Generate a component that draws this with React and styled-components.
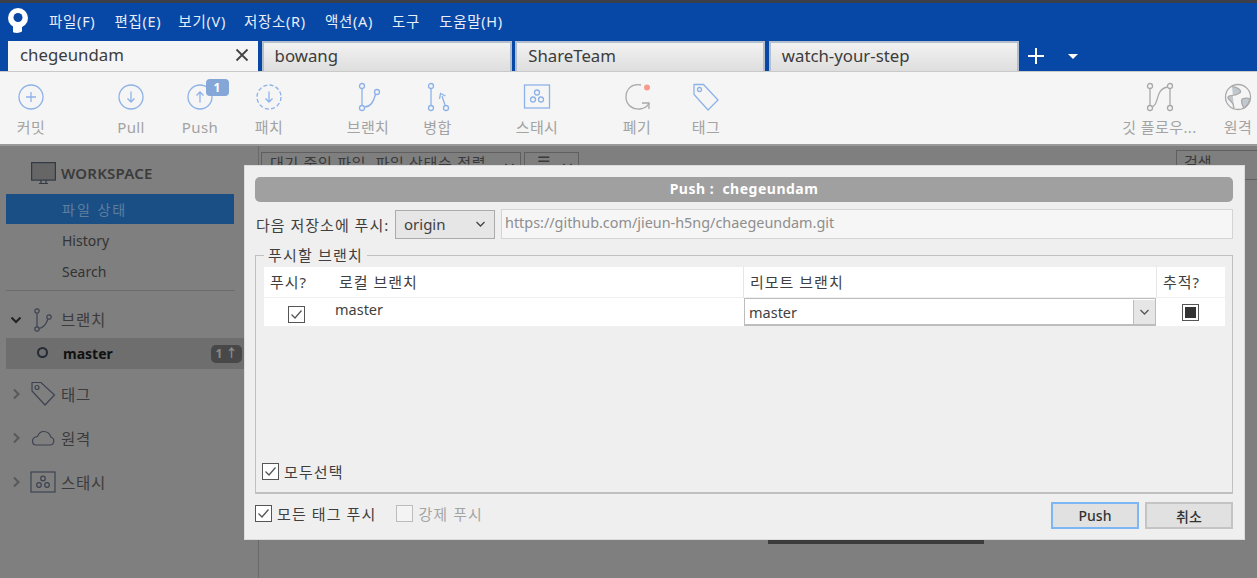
import React from "react";
import styled, { createGlobalStyle } from "styled-components";

const SANS = `"Noto Sans", "Noto Sans CJK KR", sans-serif`;

const GlobalStyle = createGlobalStyle`
  html, body { margin: 0; padding: 0; background: #7f7f7f; }
  * { box-sizing: border-box; }
  body { font-family: ${SANS}; }
`;

const Page = styled.div`
  position: relative;
  width: 1257px;
  height: 578px;
  overflow: hidden;
  display: flex;
  flex-direction: column;
`;

const Header = styled.header`
  height: 71px;
  flex: none;
  background: #0747a6;
  border-top: 3px solid #3a3f4a;
  display: flex;
  flex-direction: column;
`;

const MenuBar = styled.nav`
  height: 38px;
  flex: none;
  display: flex;
  align-items: center;
  padding-left: 8px;
`;

const Logo = styled.svg`
  width: 20px;
  height: 26px;
  margin-right: 21px;
  margin-top: -3px;
`;

const MenuItem = styled.span`
  color: #e8eef8;
  font-size: 14.5px;
  letter-spacing: 0.7px;
  margin-right: ${(p) => p.$gap}px;
  line-height: 18px;
  margin-top: -2px;
`;

const TabBar = styled.div`
  height: 30px;
  flex: none;
  display: flex;
  align-items: flex-end;
  padding-left: 8px;
  gap: 3.6px;
`;

const Tab = styled.div`
  width: 250px;
  height: 30px;
  display: flex;
  align-items: center;
  justify-content: space-between;
  padding: 0 ${(p) => (p.$active ? "8px" : "7px")} 3px ${(p) => (p.$active ? "12px" : "11px")};
  font-size: 16.8px;
  color: #3c3c3c;
  background: ${(p) => (p.$active ? "#f5f5f5" : "linear-gradient(#f2f2f2, #dedede)")};
  border: ${(p) => (p.$active ? "none" : "2px solid #b4bfcd")};
  border-bottom: none;
`;

const AddTab = styled.svg`
  width: 18px;
  height: 18px;
  margin-left: 5px;
  align-self: center;
`;

const TabMenu = styled.span`
  width: 0;
  height: 0;
  margin-left: 19px;
  align-self: center;
  border-left: 5px solid transparent;
  border-right: 5px solid transparent;
  border-top: 5px solid #fff;
`;

const Toolbar = styled.div`
  height: 75px;
  flex: none;
  background: #f5f5f5;
  border-top: 1px solid #c9c9c9;
  border-bottom: 2px solid #9a9a9a;
  display: flex;
  overflow: hidden;
`;

const ToolItem = styled.div`
  width: ${(p) => p.$w || 69}px;
  flex: none;
  margin-left: ${(p) => p.$ml || 0}px;
  margin-right: ${(p) => p.$mr || 0}px;
  display: flex;
  flex-direction: column;
  align-items: center;
  position: relative;
  padding-top: 9px;
`;

const ToolIcon = styled.svg`
  width: 32px;
  height: 32px;
  fill: none;
  stroke: ${(p) => p.$stroke || "#8db2e8"};
  stroke-width: 1.3;
`;

const ToolLabel = styled.span`
  margin-top: 4px;
  font-size: 15px;
  letter-spacing: 0.4px;
  line-height: 20px;
  color: #a3a3a3;
  white-space: nowrap;
`;

const CountBadge = styled.span`
  position: absolute;
  top: 7px;
  left: 40px;
  width: 23px;
  height: 17px;
  background: #84a7d8;
  border-radius: 4px;
  color: #fff;
  font-size: 12px;
  font-weight: 700;
  text-align: center;
  line-height: 17px;
`;

const Spacer = styled.div`
  flex: 1;
`;

const Body = styled.div`
  flex: 1;
  display: flex;
  background: #7f7f7f;
  min-height: 0;
`;

const Sidebar = styled.aside`
  width: 259px;
  flex: none;
  border-right: 1px solid #6a6a6a;
  padding-top: 11px;
`;

const WorkspaceHead = styled.div`
  height: 37px;
  display: flex;
  align-items: center;
  padding: 0 0 5px 31px;
  gap: 5px;
  font-size: 15px;
  font-weight: 600;
  letter-spacing: 0.2px;
  color: #3b3b3b;
`;

const NavRow = styled.div`
  height: ${(p) => p.$h}px;
  margin: 0 ${(p) => (p.$active ? 24 : 0)}px 0 6px;
  padding-left: 56px;
  display: flex;
  align-items: center;
  font-size: 14px;
  letter-spacing: ${(p) => (p.$active ? "2px" : "0")};
  color: ${(p) => (p.$active ? "#5d7e9f" : "#333")};
  background: ${(p) => (p.$active ? "#1a4f85" : "transparent")};
`;

const SideDivider = styled.div`
  height: 1px;
  margin: 4px 23px 0 6px;
  background: #6c6c6c;
`;

const TreeHead = styled.div`
  height: ${(p) => p.$h}px;
  padding-top: ${(p) => p.$pt || 0}px;
  display: flex;
  align-items: center;
  font-size: 15.5px;
  letter-spacing: 0.7px;
  color: #3b3b3b;
`;

const TreeList = styled.div`
  margin-top: 3px;
`;

const TreeCaret = styled.svg`
  width: 12px;
  height: 12px;
  margin-left: 10px;
  flex: none;
  fill: none;
  stroke: ${(p) => (p.$open ? "#222" : "#595959")};
  stroke-width: 2;
`;

const TreeIcon = styled.svg`
  width: 26px;
  height: 26px;
  margin: 0 5px 0 8px;
  flex: none;
  fill: none;
  stroke: #3c4350;
  stroke-width: 1.2;
`;

const BranchRow = styled.div`
  height: 31px;
  margin-left: 6px;
  display: flex;
  align-items: center;
  background: #6e6e6e;
  font-size: 14px;
  font-weight: 700;
  color: #111;
  padding-left: 31px;
`;

const BranchDot = styled.span`
  width: 11px;
  height: 11px;
  border: 2.5px solid #232a35;
  border-radius: 50%;
  margin-right: 15px;
  margin-top: -2px;
`;

const BranchBadge = styled.span`
  margin-left: auto;
  margin-right: 16px;
  width: 31px;
  height: 18px;
  border-radius: 5px;
  background: #484848;
  color: #8b8b8b;
  font-size: 12px;
  font-weight: 700;
  text-align: center;
  line-height: 18px;
`;

const Main = styled.main`
  flex: 1;
  position: relative;
  display: flex;
  align-items: flex-start;
  padding: 6px 0 0 2px;
  font-size: 15px;
  color: #3a3a3a;
`;

const FilterCombo = styled.div`
  width: 260px;
  height: 24px;
  border: 1px solid #5f5f5f;
  padding-left: 8px;
  white-space: nowrap;
  overflow: hidden;
  letter-spacing: 0.7px;
  line-height: 20px;
  display: flex;
  justify-content: space-between;
  padding-right: 5px;
`;

const ComboChevron = styled.svg`
  width: 11px;
  height: 7px;
  margin-top: 10px;
  flex: none;
  fill: none;
  stroke: #3a3a3a;
  stroke-width: 1.4;
`;

const ViewCombo = styled.div`
  width: 55px;
  height: 24px;
  margin-left: 3px;
  border: 1px solid #5f5f5f;
  padding: 0 5px 0 12px;
  line-height: 16px;
  display: flex;
  justify-content: space-between;
`;

const SearchBox = styled.div`
  width: 81px;
  height: 30px;
  margin: -2px 0 0 auto;
  border: 1px solid #5f5f5f;
  border-right: none;
  padding-left: 7px;
  line-height: 22px;
`;

const UnderBar = styled.div`
  position: absolute;
  left: 509px;
  top: 394px;
  width: 216px;
  height: 4px;
  background: #3c3c3c;
`;

const Dialog = styled.section`
  position: absolute;
  left: 244px;
  top: 165px;
  width: 1001px;
  height: 375px;
  background: #efefef;
  border: 1px solid #dcdcdc;
  padding: 11px 11px 0 10px;
  display: flex;
  flex-direction: column;
  font-size: 14.5px;
  color: #3f3f3f;
`;

const TitleBar = styled.div`
  height: 25px;
  flex: none;
  border-radius: 5px;
  background: #a0a0a0;
  color: #fff;
  font-size: 14px;
  letter-spacing: 0.5px;
  font-weight: 700;
  text-align: center;
  line-height: 24px;
  white-space: pre;
`;

const RepoRow = styled.div`
  display: flex;
  align-items: center;
  margin-top: 7px;
  height: 30px;
  flex: none;
`;

const RepoLabel = styled.span`
  width: 140px;
  padding-left: 1px;
  font-size: 15px;
  letter-spacing: 1px;
  white-space: nowrap;
`;

const RepoSelect = styled.div`
  width: 100px;
  height: 29px;
  background: #e6e6e6;
  border: 1px solid #ababab;
  display: flex;
  align-items: center;
  justify-content: space-between;
  padding: 0 8px;
  font-size: 15px;
`;

const RepoUrl = styled.div`
  flex: 1;
  height: 30px;
  margin-left: 6px;
  background: #f6f6f6;
  border: 1px solid #d4d4d4;
  padding-left: 3px;
  font-size: 14.4px;
  color: #8e8e8e;
  line-height: 25px;
`;

const Group = styled.div`
  position: relative;
  height: 239px;
  margin-top: 16px;
  flex: none;
  border: 1px solid #c0c0c0;
  border-bottom-width: 2px;
  padding: 11px 7px 0 8px;
  display: flex;
  flex-direction: column;
`;

const GroupLegend = styled.span`
  position: absolute;
  left: 8px;
  top: -10px;
  padding: 0 4px;
  background: #efefef;
  font-size: 15px;
  letter-spacing: 1.2px;
  line-height: 18px;
`;

const Table = styled.div`
  display: grid;
  grid-template-columns: 479px 413px 69px;
  grid-template-rows: 31px 28px;
  background: #fff;
  flex: none;
`;

const HeadCell = styled.div`
  display: flex;
  align-items: center;
  padding: 0 0 2px ${(p) => p.$pl || 6}px;
  border-left: ${(p) => (p.$line ? "1px solid #e6e6e6" : "none")};
  border-bottom: 1px solid #f0f0f0;
  font-size: 15px;
  letter-spacing: 1px;
`;

const HeadLabel = styled.span`
  width: ${(p) => p.$w}px;
  flex: none;
`;

const BodyCell = styled.div`
  display: flex;
  align-items: center;
  justify-content: ${(p) => (p.$center ? "center" : "flex-start")};
  padding-left: ${(p) => p.$pl || 0}px;
`;

const PushCheck = styled.span`
  display: inline-flex;
  margin: 4px 0 0 24px;
`;

const MasterName = styled.span`
  margin-left: 30px;
  margin-top: -7px;
`;

const BranchCombo = styled.div`
  width: 100%;
  height: 28px;
  display: flex;
  align-items: center;
  border: 1px solid #bdbdbd;
  border-width: 1px 1px 2px 1px;
  padding: 1px 0 0 4px;
`;

const ComboArrow = styled.span`
  margin-left: auto;
  width: 22px;
  height: 100%;
  background: #e6e6e6;
  border-left: 1px solid #bdbdbd;
  display: flex;
  align-items: center;
  justify-content: center;
`;

const CheckBox = styled.span`
  width: 17px;
  height: 17px;
  flex: none;
  background: ${(p) => (p.$disabled ? "#f4f4f4" : "#fff")};
  border: ${(p) => (p.$disabled ? "1.5px solid #bcbcbc" : "1.5px solid #555")};
  display: inline-flex;
  align-items: center;
  justify-content: center;
`;

const TrackMark = styled.span`
  width: 11px;
  height: 11px;
  background: #333;
`;

const CheckLabel = styled.label`
  display: flex;
  align-items: center;
  gap: 5px;
  font-size: 15px;
  color: ${(p) => (p.$disabled ? "#a5a5a5" : "#3f3f3f")};
  margin-left: ${(p) => p.$ml || 0}px;
  letter-spacing: 1.1px;
`;

const SelectAll = styled.div`
  margin-top: auto;
  margin-bottom: 10px;
  margin-left: -2px;
`;

const Footer = styled.div`
  display: flex;
  align-items: flex-start;
  margin-top: 8px;
  height: 27px;
`;

const FooterChecks = styled.div`
  display: flex;
  align-items: center;
  height: 23px;
`;

const Button = styled.button`
  width: 88px;
  height: 27px;
  margin-left: ${(p) => p.$ml || 0}px;
  background: #e1e1e1;
  border: 2px solid ${(p) => (p.$primary ? "#7cb6f5" : "#c4c4c4")};
  color: #333;
  font-family: ${SANS};
  font-size: 14px;
  font-weight: 500;
  padding: 0;
`;

const Check = () => (
  <svg width="13" height="13" viewBox="0 0 13 13" fill="none" stroke="#555" strokeWidth="1.3">
    <path d="M1.5 6.5 5 10l6.5-7.5" />
  </svg>
);

const Chevron = ({ color = "#444" }) => (
  <svg width="11" height="7" viewBox="0 0 11 7" fill="none" stroke={color} strokeWidth="1.3">
    <path d="M1.5 1 5.5 5l4-4" />
  </svg>
);

const menus = [
  ["파일(F)", 19],
  ["편집(E)", 17],
  ["보기(V)", 18],
  ["저장소(R)", 19],
  ["액션(A)", 19],
  ["도구", 19],
  ["도움말(H)", 0],
];

const tabs = ["bowang", "ShareTeam", "watch-your-step"];

function App() {
  return (
    <>
      <GlobalStyle />
      <Page>
        <Header>
          <MenuBar>
            <Logo viewBox="0 0 20 26">
              <circle cx="10" cy="10" r="10" fill="#fff" />
              <path d="M5 16h9v7.5c-2 1.500-7 2-9 .5z" fill="#fff" />
              <circle cx="10" cy="9.5" r="4.5" fill="#0747a6" />
            </Logo>
            {menus.map(([label, gap]) => (
              <MenuItem key={label} $gap={gap}>
                {label}
              </MenuItem>
            ))}
          </MenuBar>
          <TabBar>
            <Tab $active>
              chegeundam
              <svg width="16" height="16" viewBox="0 0 16 16" stroke="#444" strokeWidth="1.8">
                <path d="M2.5 2.5l11 11M13.5 2.5l-11 11" />
              </svg>
            </Tab>
            {tabs.map((name) => (
              <Tab key={name}>{name}</Tab>
            ))}
            <AddTab viewBox="0 0 18 18" stroke="#fff" strokeWidth="2">
              <path d="M9 1v16M1 9h16" />
            </AddTab>
            <TabMenu />
          </TabBar>
        </Header>

        <Toolbar>
          <ToolItem $w={62}>
            <ToolIcon viewBox="0 0 32 32">
              <circle cx="16" cy="16" r="12" />
              <path d="M16 11v10M11 16h10" />
            </ToolIcon>
            <ToolLabel>커밋</ToolLabel>
          </ToolItem>
          <ToolItem $ml={34.5}>
            <ToolIcon viewBox="0 0 32 32">
              <circle cx="16" cy="16" r="12" />
              <path d="M16 10.5v10M12.5 17.5 16 21l3.5-3.5" />
            </ToolIcon>
            <ToolLabel>Pull</ToolLabel>
          </ToolItem>
          <ToolItem>
            <ToolIcon viewBox="0 0 32 32">
              <circle cx="16" cy="16" r="12" />
              <path d="M16 21.5v-10M12.5 14.5 16 11l3.5 3.5" />
            </ToolIcon>
            <ToolLabel>Push</ToolLabel>
            <CountBadge>1</CountBadge>
          </ToolItem>
          <ToolItem>
            <ToolIcon viewBox="0 0 32 32">
              <circle cx="16" cy="16" r="12" strokeDasharray="4 2.3" />
              <path d="M16 10.5v10M12.5 17.5 16 21l3.5-3.5" />
            </ToolIcon>
            <ToolLabel>패치</ToolLabel>
          </ToolItem>
          <ToolItem $ml={30}>
            <ToolIcon viewBox="0 0 32 32">
              <circle cx="10" cy="5" r="2.5" />
              <circle cx="10" cy="27" r="2.5" />
              <circle cx="25" cy="11" r="2.5" />
              <path d="M10 7.5v17M12.5 26c6 0 9-4 11-13" />
            </ToolIcon>
            <ToolLabel>브랜치</ToolLabel>
          </ToolItem>
          <ToolItem $w={70}>
            <ToolIcon viewBox="0 0 32 32">
              <circle cx="9" cy="5" r="2.5" />
              <circle cx="9" cy="27" r="2.5" />
              <circle cx="24" cy="27" r="2.5" />
              <path d="M9 7.5v17M23 24l-3-9M17.5 18l1-5.5 5 2.5" />
            </ToolIcon>
            <ToolLabel>병합</ToolLabel>
          </ToolItem>
          <ToolItem $ml={30}>
            <ToolIcon viewBox="0 0 32 32">
              <rect x="3.5" y="4" width="25" height="23" />
              <circle cx="16" cy="11.5" r="2.5" />
              <circle cx="12" cy="18.5" r="2.5" />
              <circle cx="20" cy="18.5" r="2.5" />
            </ToolIcon>
            <ToolLabel>스태시</ToolLabel>
          </ToolItem>
          <ToolItem $ml={31}>
            <ToolIcon viewBox="0 0 32 32" $stroke="#a9a9a9">
              <path d="M20 4C10 2 5 9 5 16c0 8 7 13 14 12 5-.7 8-3.5 9-6" />
              <path d="M21 22h7v6" />
              <circle cx="26" cy="6.5" r="3" fill="#f79a8b" stroke="none" />
            </ToolIcon>
            <ToolLabel>폐기</ToolLabel>
          </ToolItem>
          <ToolItem>
            <ToolIcon viewBox="0 0 32 32">
              <path d="M4 3.5h9.5L28 19 18 29 4 13.5z" />
              <circle cx="9.5" cy="8.5" r="2" />
            </ToolIcon>
            <ToolLabel>태그</ToolLabel>
          </ToolItem>
          <Spacer />
          <ToolItem $w={79}>
            <ToolIcon viewBox="0 0 32 32" $stroke="#a9a9a9">
              <circle cx="6" cy="5" r="2.5" />
              <circle cx="26" cy="5" r="2.5" />
              <circle cx="6" cy="27" r="2.5" />
              <circle cx="26" cy="27" r="2.5" />
              <path d="M6 7.5v17M26 7.5v17M8 26c8-2 2-18 16-20" />
            </ToolIcon>
            <ToolLabel>깃 플로우...</ToolLabel>
          </ToolItem>
          <ToolItem $w={78} $mr={-20}>
            <ToolIcon viewBox="0 0 32 32" $stroke="#a9a9a9">
              <circle cx="16" cy="16" r="12.5" />
              <path
                d="M10 5c3 2 6 1 8 4s-2 4-5 5-6 0-7 2 4 4 5 7l1 4M20 18c3-1 6-1 8 0-1 4-3 7-6 9-2-3-3-6-2-9z"
                fill="#c2c8d0"
              />
            </ToolIcon>
            <ToolLabel>원격</ToolLabel>
          </ToolItem>
        </Toolbar>

        <Body>
          <Sidebar>
            <WorkspaceHead>
              <svg width="25" height="23" viewBox="0 0 25 23" fill="none" stroke="#343a45" strokeWidth="1.2">
                <rect x="0.6" y="0.6" width="23.8" height="17.5" fill="#666" />
                <path d="M8 21.5h9M10 18v3.5M15 18v3.5" />
              </svg>
              WORKSPACE
            </WorkspaceHead>
            <NavRow $h={30} $active>파일 상태</NavRow>
            <NavRow $h={33}>History</NavRow>
            <NavRow $h={29}>Search</NavRow>
            <SideDivider />
            <TreeHead $h={47} $pt={10}>
              <TreeCaret viewBox="0 0 12 12" $open>
                <path d="M1.5 3.5 6 8l4.5-4.5" />
              </TreeCaret>
              <TreeIcon viewBox="0 0 26 26">
                <circle cx="7" cy="4" r="2.2" />
                <circle cx="7" cy="22" r="2.2" />
                <circle cx="19" cy="10" r="2.2" />
                <path d="M7 6.2v13.6M9 21.5c5-.5 7-4 9-9.5" />
              </TreeIcon>
              브랜치
            </TreeHead>
            <BranchRow>
              <BranchDot />
              master
              <BranchBadge>1 ↑</BranchBadge>
            </BranchRow>
            <TreeList>
              <TreeHead $h={44}>
                <TreeCaret viewBox="0 0 12 12">
                  <path d="M4 1.5 8.5 6 4 10.5" />
                </TreeCaret>
                <TreeIcon viewBox="0 0 26 26">
                  <path d="M2 1.5h9L24.5 14 15 24 2 10z" />
                  <circle cx="7" cy="6.5" r="2" />
                </TreeIcon>
                태그
              </TreeHead>
              <TreeHead $h={44}>
                <TreeCaret viewBox="0 0 12 12">
                  <path d="M4 1.5 8.5 6 4 10.5" />
                </TreeCaret>
                <TreeIcon viewBox="0 0 26 26">
                  <path d="M6 20h14a4 4 0 0 0 1-7.8C20 9 17 6.5 13.5 6.5 10 6.5 8.5 9 7.5 11.5 4 12 2.5 14 2.5 16c0 2.5 1.500 4 3.500 4z" />
                </TreeIcon>
                원격
              </TreeHead>
              <TreeHead $h={44}>
                <TreeCaret viewBox="0 0 12 12">
                  <path d="M4 1.5 8.5 6 4 10.5" />
                </TreeCaret>
                <TreeIcon viewBox="0 0 26 26">
                  <rect x="1" y="3" width="24" height="20" />
                  <circle cx="13" cy="9.5" r="2.3" />
                  <circle cx="9" cy="16" r="2.3" />
                  <circle cx="17" cy="16" r="2.3" />
                </TreeIcon>
                스태시
              </TreeHead>
            </TreeList>
          </Sidebar>

          <Main>
            <FilterCombo>
              대기 중인 파일, 파일 상태순 정렬
              <ComboChevron viewBox="0 0 11 7">
                <path d="M1.5 1 5.5 5l4-4" />
              </ComboChevron>
            </FilterCombo>
            <ViewCombo>
              ☰
              <ComboChevron viewBox="0 0 11 7">
                <path d="M1.5 1 5.5 5l4-4" />
              </ComboChevron>
            </ViewCombo>
            <SearchBox>검색</SearchBox>
            <UnderBar />
          </Main>
        </Body>

        <Dialog>
          <TitleBar>{"Push :  chegeundam"}</TitleBar>
          <RepoRow>
            <RepoLabel>다음 저장소에 푸시:</RepoLabel>
            <RepoSelect>
              origin
              <Chevron />
            </RepoSelect>
            <RepoUrl>https://github.com/jieun-h5ng/chaegeundam.git</RepoUrl>
          </RepoRow>
          <Group>
            <GroupLegend>푸시할 브랜치</GroupLegend>
            <Table>
              <HeadCell>
                <HeadLabel $w={69}>푸시?</HeadLabel>
                로컬 브랜치
              </HeadCell>
              <HeadCell $line>리모트 브랜치</HeadCell>
              <HeadCell $line>추적?</HeadCell>
              <BodyCell>
                <PushCheck>
                  <CheckBox>
                    <Check />
                  </CheckBox>
                </PushCheck>
                <MasterName>master</MasterName>
              </BodyCell>
              <BodyCell $pl={1}>
                <BranchCombo>
                  master
                  <ComboArrow>
                    <Chevron color="#555" />
                  </ComboArrow>
                </BranchCombo>
              </BodyCell>
              <BodyCell $center>
                <CheckBox>
                  <TrackMark />
                </CheckBox>
              </BodyCell>
            </Table>
            <SelectAll>
              <CheckLabel>
                <CheckBox>
                  <Check />
                </CheckBox>
                모두선택
              </CheckLabel>
            </SelectAll>
          </Group>
          <Footer>
            <FooterChecks>
              <CheckLabel>
                <CheckBox>
                  <Check />
                </CheckBox>
                모든 태그 푸시
              </CheckLabel>
              <CheckLabel $disabled $ml={20}>
                <CheckBox $disabled />
                강제 푸시
              </CheckLabel>
            </FooterChecks>
            <Spacer />
            <Button $primary>Push</Button>
            <Button $ml={6}>취소</Button>
          </Footer>
        </Dialog>
      </Page>
    </>
  );
}

export default App;
